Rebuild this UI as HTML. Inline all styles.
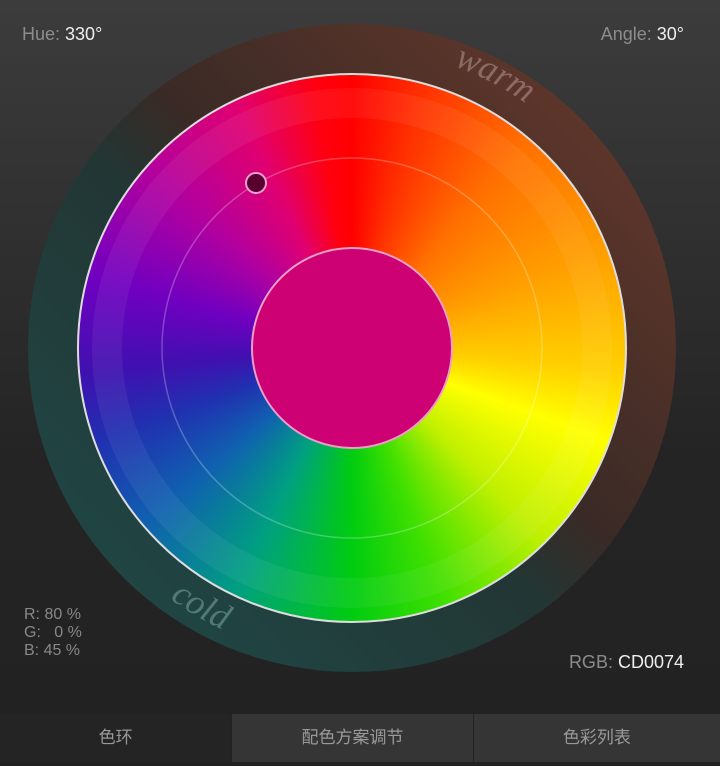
<!DOCTYPE html>
<html><head><meta charset="utf-8"><style>
body{margin:0;width:720px;height:766px;overflow:hidden;background:linear-gradient(#3c3c3c,#242424 60%,#222);font-family:"Liberation Sans","Noto Sans CJK SC",sans-serif;position:relative}
.t{position:absolute;font-size:18px;color:#8c8c8c}
.t b{color:#eee;font-weight:normal}
.tabs{position:absolute;left:0;top:714px;width:720px;height:52px;display:flex}
.tabs div{height:48px;line-height:48px;text-align:center;color:#999;font-size:17px;background:#353535;border-left:1px solid #222}
</style></head><body>
<div class="t" style="left:22px;top:24px">Hue: <b>330°</b></div>
<div class="t" style="right:36px;top:24px">Angle: <b>30°</b></div>
<div class="t" style="left:24px;top:606px;font-size:16px;line-height:18px;color:#888">R: 80 %<br>G: &nbsp; 0 %<br>B: 45 %</div>
<div class="t" style="right:36px;top:652px">RGB: <b>CD0074</b></div>
<svg width="720" height="714" style="position:absolute;left:0;top:0">
<defs>
<linearGradient id="og" x1="1" y1="0" x2="0" y2="1">
<stop offset="0" stop-color="#6e3b2c"/><stop offset="0.45" stop-color="#3a2a26"/><stop offset="0.55" stop-color="#223634"/><stop offset="1" stop-color="#1f4c4a"/></linearGradient>
<path id="wp" d="M 352 348 m -300 0 a 300 300 0 0 1 600 0"/>
<path id="cp" d="M 352 348 m -310 0 a 310 310 0 0 0 620 0"/>
</defs>
<circle cx="352" cy="348" r="324" fill="url(#og)"/>
<text font-family="Liberation Serif,serif" font-size="36" fill="#8a6a62" font-style="italic"><textPath href="#wp" startOffset="61%">warm</textPath></text>
<text font-family="Liberation Serif,serif" font-size="36" fill="#4f7a78" font-style="italic"><textPath href="#cp" startOffset="30%">cold</textPath></text>
</svg>
<div style="position:absolute;left:77px;top:73px;width:550px;height:550px;border-radius:50%;box-sizing:border-box;border:2px solid #ddd;background:conic-gradient(#ff0000 0deg,#ff3000 15deg,#ff7000 40deg,#ffa000 70deg,#ffd000 95deg,#ffff00 110deg,#c0f000 135deg,#40e000 160deg,#00cc10 180deg,#00a080 205deg,#1060b0 230deg,#2030b0 250deg,#4010b0 265deg,#7000c0 285deg,#b000a0 310deg,#e00070 335deg,#ff0010 352deg,#ff0000 360deg)"></div>
<svg width="720" height="714" style="position:absolute;left:0;top:0">
<circle cx="352" cy="348" r="190" fill="none" stroke="rgba(255,255,255,0.25)" stroke-width="1.5"/>
<circle cx="352" cy="348" r="245" fill="none" stroke="rgba(255,255,255,0.06)" stroke-width="30"/>
<circle cx="352" cy="348" r="100" fill="#cd0074" stroke="#e8a0c8" stroke-width="2"/>
<circle cx="256" cy="183" r="10" fill="#5a0030" stroke="#f0a0d0" stroke-width="2"/>
</svg>
<div class="tabs"><div style="width:232px;background:#242424;border:none">色环</div><div style="width:241px">配色方案调节</div><div style="width:247px">色彩列表</div></div>
</body></html>
